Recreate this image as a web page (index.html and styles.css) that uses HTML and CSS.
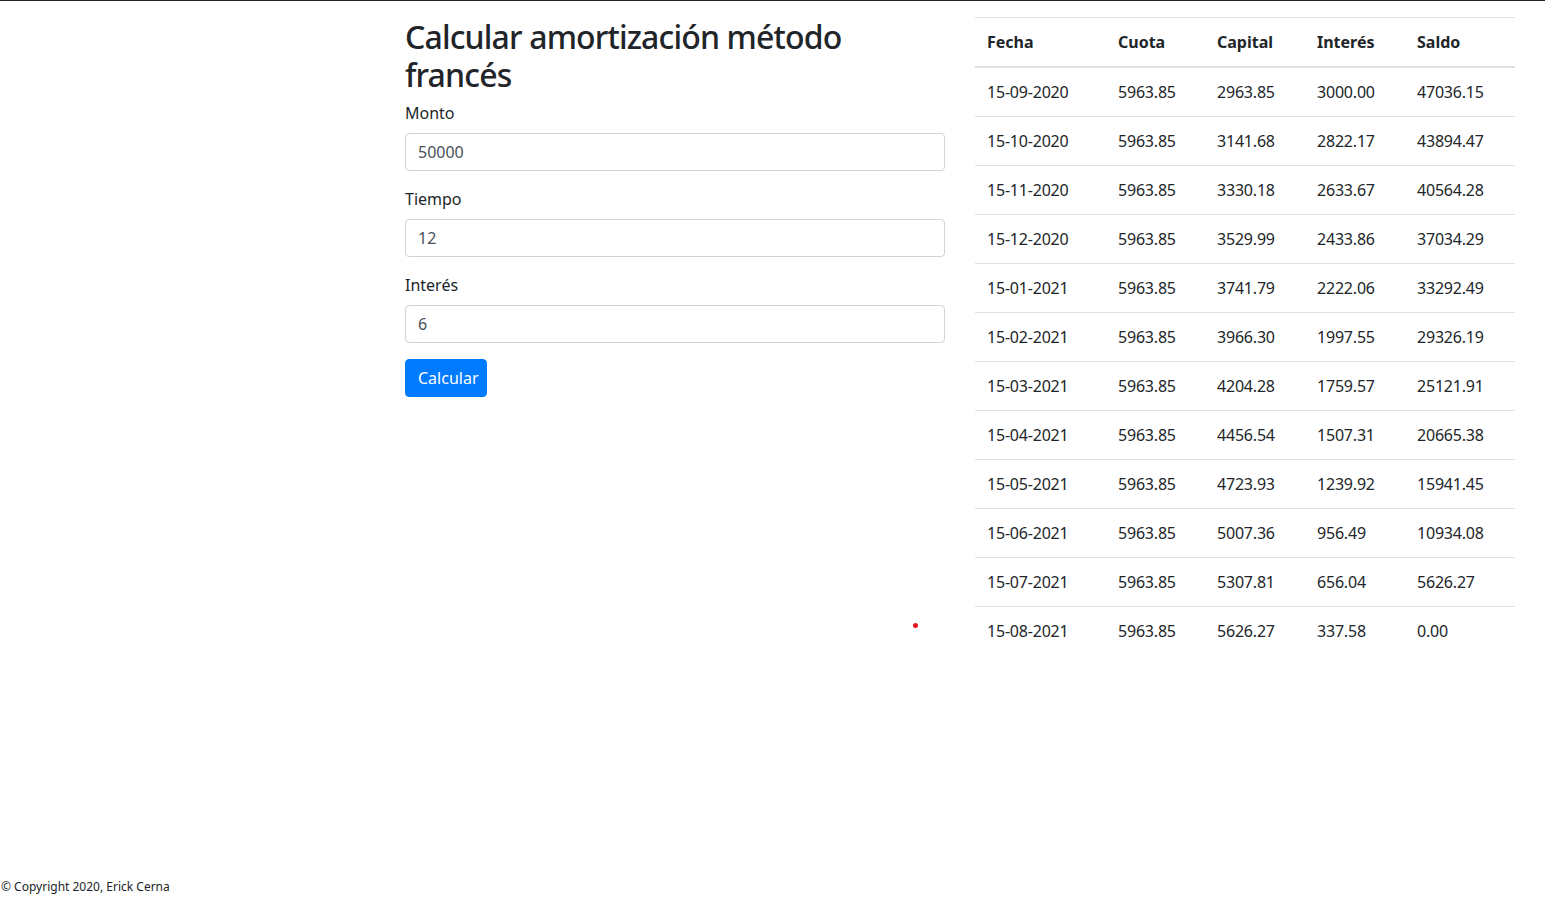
FILE: index.html
```html
<!DOCTYPE html>
<html lang="es">
<head>
<meta charset="utf-8">
<title>Amortización método francés</title>
<link rel="stylesheet" href="styles.css">
</head>
<body>
<main class="page">
  <div class="container">
    <section class="col">
      <h2 class="title">Calcular amortización método francés</h2>
      <form class="form">
        <div class="form-group">
          <label class="label" for="monto">Monto</label>
          <input class="input" id="monto" type="text" value="50000">
        </div>
        <div class="form-group">
          <label class="label" for="tiempo">Tiempo</label>
          <input class="input" id="tiempo" type="text" value="12">
        </div>
        <div class="form-group">
          <label class="label" for="interes">Interés</label>
          <input class="input" id="interes" type="text" value="6">
        </div>
        <button class="btn" type="button">Calcular</button>
      </form>
      <span class="dot"></span>
    </section>
    <section class="col">
      <table class="table">
        <thead>
          <tr><th class="c1">Fecha</th><th class="c2">Cuota</th><th class="c3">Capital</th><th class="c4">Interés</th><th class="c5">Saldo</th></tr>
        </thead>
        <tbody>
          <tr><td>15-09-2020</td><td>5963.85</td><td>2963.85</td><td>3000.00</td><td>47036.15</td></tr>
          <tr><td>15-10-2020</td><td>5963.85</td><td>3141.68</td><td>2822.17</td><td>43894.47</td></tr>
          <tr><td>15-11-2020</td><td>5963.85</td><td>3330.18</td><td>2633.67</td><td>40564.28</td></tr>
          <tr><td>15-12-2020</td><td>5963.85</td><td>3529.99</td><td>2433.86</td><td>37034.29</td></tr>
          <tr><td>15-01-2021</td><td>5963.85</td><td>3741.79</td><td>2222.06</td><td>33292.49</td></tr>
          <tr><td>15-02-2021</td><td>5963.85</td><td>3966.30</td><td>1997.55</td><td>29326.19</td></tr>
          <tr><td>15-03-2021</td><td>5963.85</td><td>4204.28</td><td>1759.57</td><td>25121.91</td></tr>
          <tr><td>15-04-2021</td><td>5963.85</td><td>4456.54</td><td>1507.31</td><td>20665.38</td></tr>
          <tr><td>15-05-2021</td><td>5963.85</td><td>4723.93</td><td>1239.92</td><td>15941.45</td></tr>
          <tr><td>15-06-2021</td><td>5963.85</td><td>5007.36</td><td>956.49</td><td>10934.08</td></tr>
          <tr><td>15-07-2021</td><td>5963.85</td><td>5307.81</td><td>656.04</td><td>5626.27</td></tr>
          <tr><td>15-08-2021</td><td>5963.85</td><td>5626.27</td><td>337.58</td><td>0.00</td></tr>
        </tbody>
      </table>
    </section>
  </div>
</main>
<footer class="footer">© Copyright 2020, Erick Cerna</footer>
</body>
</html>
```

FILE: styles.css
```css
* { box-sizing: border-box; }
html, body { height: 100%; }
body {
  margin: 0;
  border-top: 1px solid #212529;
  font-family: "Noto Sans", "Open Sans", sans-serif;
  font-size: 16px;
  line-height: 1.5;
  color: #212529;
  background: #fff;
  display: flex;
  flex-direction: column;
}
.page { flex: 1; }
.container {
  width: 1140px;
  margin-left: 390px;
  margin-top: 16px;
  display: grid;
  grid-template-columns: 1fr 1fr;
}
.col { padding: 0 15px; position: relative; }
.title {
  margin: 0 0 6px;
  padding-top: 1px;
  font-size: 32px;
  font-weight: 500;
  line-height: 1.2;
  letter-spacing: -0.85px;
}
.form { margin: 0; }
.form-group { margin-bottom: 16px; }
.label { display: block; margin-bottom: 8px; }
.input {
  display: block;
  width: 100%;
  height: 38px;
  padding: 6px 12px;
  font: inherit;
  color: #495057;
  background: #fff;
  border: 1px solid #ced4da;
  border-radius: 4px;
}
.btn {
  font: inherit;
  color: #fff;
  background: #007bff;
  border: 1px solid #007bff;
  border-radius: 4px;
  padding: 6px 12px;
  line-height: 1.5;
  width: 82px;
}
.dot {
  position: absolute;
  left: 523px;
  top: 606px;
  width: 5px;
  height: 5px;
  border-radius: 50%;
  background: #e8141c;
}
.table {
  width: 100%;
  border-collapse: collapse;
}
.table th, .table td {
  padding: 12px;
  text-align: left;
  vertical-align: top;
  border-top: 1px solid #dee2e6;
}
.table td { letter-spacing: -0.2px; }
.table th { font-weight: 700; border-bottom: 2px solid #dee2e6; }
.c1 { width: 131px; }
.c2 { width: 99px; }
.c3 { width: 100px; }
.c4 { width: 100px; }
.c5 { width: 110px; }
.footer {
  font-size: 12px;
  line-height: 18px;
  padding: 0 0 4px 1px;
}
```
